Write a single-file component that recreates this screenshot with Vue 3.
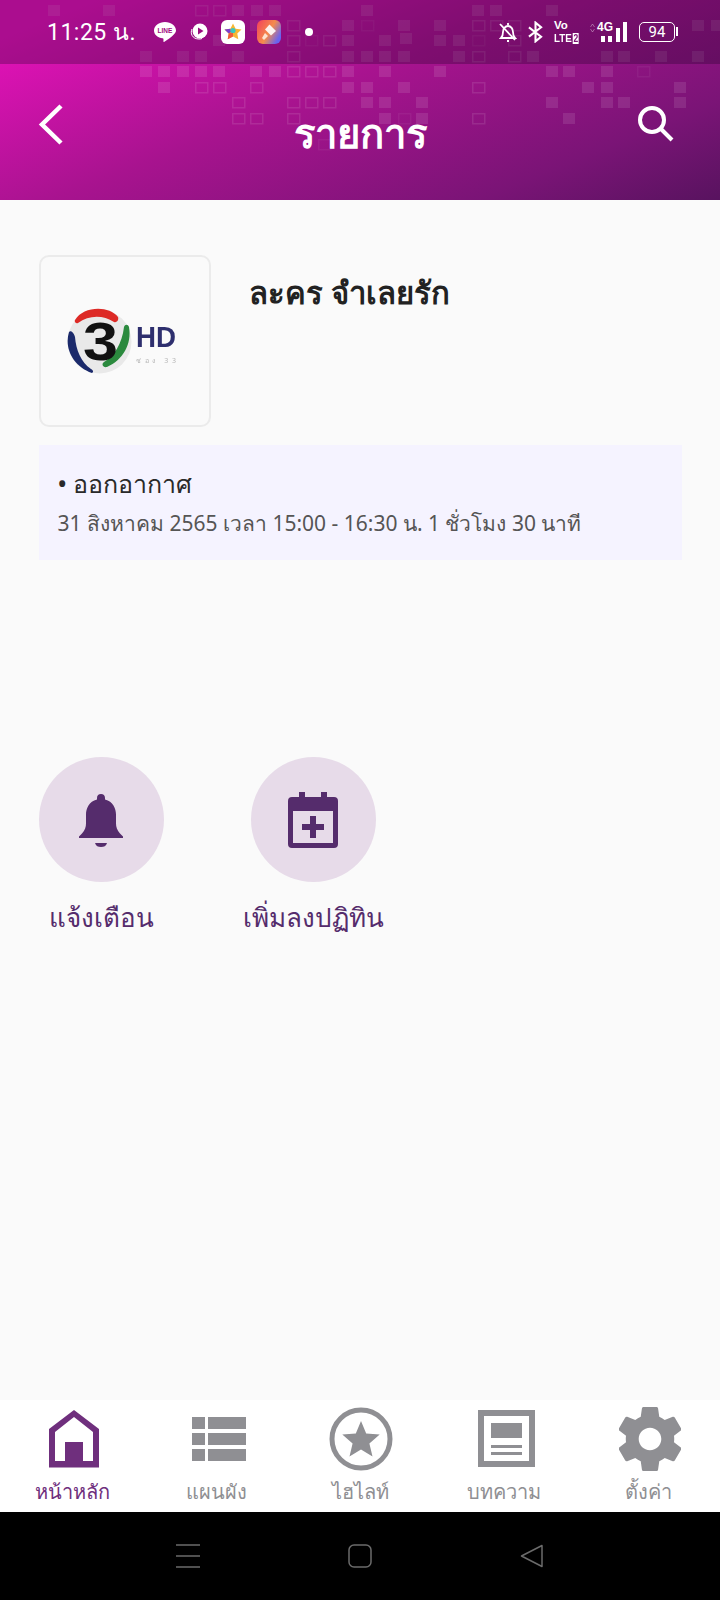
<script setup>
const filled = [[48,5],[103,5],[232,5],[251,5],[269,5],[361,5],[472,5],[490,5],[546,5],[250,20],[342,20],[398,20],[434,20],[692,20],[711,20],[213,35],[342,35],[379,35],[400,33],[434,35],[453,35],[140,51],[177,51],[195,51],[232,51],[342,51],[361,51],[379,51],[398,51],[453,51],[527,51],[601,51],[618,51],[655,51],[692,51],[140,66],[158,66],[177,66],[195,66],[213,66],[250,66],[269,66],[342,66],[379,66],[434,66],[546,66],[563,66],[601,66],[158,82],[342,82],[361,82],[398,82],[582,82],[601,82],[674,82],[361,97],[379,97],[416,97],[546,97],[601,97],[618,97],[674,97],[379,113],[416,113],[563,113]]
const outlined = [[195,5],[213,5],[287,20],[472,20],[490,20],[508,20],[287,35],[323,35],[508,35],[287,51],[472,51],[508,51],[287,66],[305,66],[323,66],[195,82],[213,82],[250,82],[472,82],[232,97],[287,97],[305,97],[323,97],[232,113],[250,113],[287,113],[472,113]]
const faint = [[361,20],[305,35],[472,35],[637,66],[398,113],[318,139]]
const tabs = [
  { key: 'home', label: 'หน้าหลัก', active: true },
  { key: 'plan', label: 'แผนผัง' },
  { key: 'star', label: 'ไฮไลท์' },
  { key: 'news', label: 'บทความ' },
  { key: 'gear', label: 'ตั้งค่า' }
]
</script>

<template>
  <div class="page">
    <div class="top">
      <svg class="pattern" width="720" height="200" viewBox="0 0 720 200">
        <rect v-for="(s, i) in filled" :key="'f' + i" :x="s[0]" :y="s[1]" width="12" height="11" fill="#fff" fill-opacity=".1" />
        <rect v-for="(s, i) in outlined" :key="'o' + i" :x="s[0] + .75" :y="s[1] + .75" width="12" height="10" fill="none" stroke="#fff" stroke-opacity=".1" stroke-width="1.500" />
        <rect v-for="(s, i) in faint" :key="'g' + i" :x="s[0] + .75" :y="s[1] + .75" width="12" height="10" fill="none" stroke="#fff" stroke-opacity=".05" stroke-width="1.500" />
      </svg>
      <div class="status">
        <span class="time">11:25 น.</span>
        <div class="notif">
          <svg width="24" height="24" viewBox="0 0 24 24"><path d="M12 2C5.900 2 1 5.900 1 10.400c0 4.200 3.900 7.200 8.600 7.900.6.100.9.400.9 1l-.1 2.200c0 .5.500.6 1 .3 2.500-1.600 7.300-4.700 9.400-7.300 1.300-1.500 2.200-2.500 2.200-4.100C23 5.900 18.100 2 12 2z" fill="#fff" /><text x="12" y="13" text-anchor="middle" font-size="6.500" font-weight="700" fill="#a00b80" font-family="Liberation Sans">LINE</text></svg>
          <svg width="20" height="20" viewBox="0 0 20 20"><circle cx="11" cy="9" r="7.500" fill="#fff" /><path d="M9 5.500l5.500 3.500L9 12.500z" fill="#9c0b80" /><path d="M3 7c-2 4 0 10 7 10 1 0 2 0 3-.5" fill="none" stroke="#fff" stroke-width="1" /></svg>
          <div class="appicon white">
            <svg width="20" height="20" viewBox="0 0 20 20"><path d="M10 1.500l2.600 5.200 5.900.8-4.200 4 1 5.800L10 14.600l-5.300 2.700 1-5.800-4.200-4 5.900-.8z" fill="#f7b733" /><path d="M1.500 7.500l5.900-.8L8 10l-2.300 1.500z" fill="#7b3fd1" /><path d="M4.700 17.300l1-5.800L10 10l0 4.600z" fill="#ef5a3c" /><circle cx="10" cy="8.500" r="2.600" fill="#3cc6c0" /></svg>
          </div>
          <div class="appicon paint">
            <svg width="20" height="20" viewBox="0 0 20 20"><path d="M10.500 2.500l6.500 6.500-5 4.500-6-6z" fill="#fff" fill-opacity=".9" /><path d="M6 11l3 3-4 4-2-2z" fill="#fde3d0" /></svg>
          </div>
          <span class="dot"></span>
        </div>
        <div class="sys">
          <svg width="18" height="22" viewBox="0 0 18 22" fill="none" stroke="#fff" stroke-width="1.800"><path d="M2 17h14c-1.500-1.500-2-3-2-6 0-3-2-6-5-6S4 8 4 11c0 3-.5 4.500-2 6z" /><path d="M9 2v2M8 20h2M1 3l15 16" /></svg>
          <svg width="15" height="22" viewBox="0 0 16 22" fill="none" stroke="#fff" stroke-width="2.200"><path d="M1 6l13 10-6 5V1l6 5L1 16" /></svg>
          <div class="volte"><span class="vo">Vo</span><span class="lte">LTE<b>2</b></span></div>
          <div class="net">
            <svg class="updown" width="5" height="10" viewBox="0 0 5 10" fill="none" stroke="#fff" stroke-opacity=".35" stroke-width="1"><path d="M.5 4l2-3 2 3M.5 6l2 3 2-3" /></svg>
            <span class="g4">4G</span>
            <div class="bars"><i class="b1"></i><i class="b2"></i><i class="b3"></i><i class="b4"></i></div>
          </div>
          <div class="batt"><span>94</span></div>
        </div>
      </div>
      <header class="bar">
        <svg class="back" width="28" height="44" viewBox="0 0 28 44" fill="none" stroke="#fff" stroke-width="4.500"><path d="M24 3L5 21.500 24 40" /></svg>
        <span class="title">รายการ</span>
        <svg class="search" width="40" height="40" viewBox="0 0 40 40" fill="none" stroke="#fff" stroke-width="4"><circle cx="16" cy="16" r="12" /><path d="M25 25l11 11" /></svg>
      </header>
    </div>

    <main class="content">
      <section class="head">
        <div class="logo">
          <svg class="mark" width="120" height="76" viewBox="0 0 120 76">
            <circle cx="34.500" cy="38.500" r="32" fill="#e9e9e9" />
            <path d="M10 17C18 3 44 2 53 14c1 3-1 6-4 5C38 12 24 12 13 20c-2 1-4-1-3-3z" fill="#dd2a26" />
            <path d="M4 29C-1 45 8 63 27 70c2-1 1-3-1-4C16 59 11 47 10 34c-1-4-4-7-6-5z" fill="#1b2a6b" />
            <path d="M64 24c3 17-6 33-22 40-4 1-6-3-3-5 10-6 18-18 20-35 1-3 4-3 5 0z" fill="#2b8a3e" />
            <text x="18" y="57" font-size="53" font-weight="700" fill="#111" font-family="Liberation Sans" textLength="35" lengthAdjust="spacingAndGlyphs">3</text>
            <text x="71" y="44" font-size="29" font-weight="700" fill="#2e2f6e" font-family="Liberation Sans" textLength="40" lengthAdjust="spacingAndGlyphs">HD</text>
            <text x="71" y="60" font-size="7" fill="#b5b5b5" font-family="Noto Sans, sans-serif" textLength="40">ช่อง 33</text>
          </svg>
        </div>
        <h1 class="name">ละคร จำเลยรัก</h1>
      </section>

      <section class="info">
        <div class="lead">• ออกอากาศ</div>
        <div class="when">31 สิงหาคม 2565 เวลา 15:00 - 16:30 น. 1 ชั่วโมง 30 นาที</div>
      </section>

      <section class="actions">
        <div class="action">
          <div class="circle">
            <svg width="48" height="54" viewBox="0 0 48 54"><path d="M24 1c2.500 0 4 1.500 4 4v1.500c8 2 11 9 11 15v9c0 3 1 7 4 10l3 3v1.500H2V43.500l3-3c3-3 4-7 4-10v-9c0-6 3-13 11-15V5c0-2.500 1.500-4 4-4z" fill="#552c6c" /><path d="M18 50h12c-1 3-3 4-6 4s-5-1-6-4z" fill="#552c6c" /></svg>
          </div>
          <span class="alabel">แจ้งเตือน</span>
        </div>
        <div class="action">
          <div class="circle">
            <svg width="50" height="56" viewBox="0 0 50 56"><path d="M4 5h7V0h6v5h16V0h6v5h7a4 4 0 0 1 4 4v43a4 4 0 0 1-4 4H4a4 4 0 0 1-4-4V9a4 4 0 0 1 4-4zm1 14v32h40V19zm17 5h6v8h8v6h-8v8h-6v-8h-8v-6h8z" fill="#552c6c" fill-rule="evenodd" /></svg>
          </div>
          <span class="alabel">เพิ่มลงปฏิทิน</span>
        </div>
      </section>
    </main>

    <nav class="tabs">
      <div v-for="t in tabs" :key="t.key" class="tab" :class="{ on: t.active }">
        <div class="ticon" :class="t.key">
          <svg v-if="t.key === 'home'" width="52" height="58" viewBox="0 0 52 58"><path d="M26 0L51 19v38.500H1V19zM7 22v29h10V32h18v19h10V22L26 7z" fill="#6f2f7d" fill-rule="evenodd" /></svg>
          <svg v-else-if="t.key === 'plan'" width="54" height="44" viewBox="0 0 54 44" fill="#8f8f93"><rect x="0" y="0" width="13" height="12" /><rect x="16" y="0" width="38" height="12" /><rect x="0" y="16" width="13" height="12" /><rect x="16" y="16" width="38" height="12" /><rect x="0" y="32" width="13" height="12" /><rect x="16" y="32" width="38" height="12" /></svg>
          <svg v-else-if="t.key === 'star'" width="64" height="64" viewBox="0 0 64 64"><circle cx="32" cy="32" r="29" fill="none" stroke="#8f8f93" stroke-width="5" /><path d="M32 14l5.200 12.500 13.500 1.100-10.300 8.800 3.100 13.200L32 42.600l-11.500 7 3.100-13.200-10.300-8.800 13.500-1.100z" fill="#8f8f93" /></svg>
          <svg v-else-if="t.key === 'news'" width="57" height="57" viewBox="0 0 57 57" fill="#8f8f93"><path d="M0 0h57v57H0zM6 6v45h45V6z" fill-rule="evenodd" /><rect x="13" y="13" width="31" height="15" /><rect x="13" y="35" width="31" height="3" /><rect x="13" y="42" width="31" height="3" /></svg>
          <svg v-else width="62" height="64" viewBox="2.400 2 19.200 20" preserveAspectRatio="none"><path d="M19.430 12.980c.040-.320.070-.640.070-.980s-.030-.660-.070-.980l2.110-1.650c.190-.150.240-.420.120-.640l-2-3.460c-.120-.220-.390-.300-.610-.220l-2.490 1c-.520-.400-1.080-.730-1.690-.980l-.380-2.650C14.460 2.180 14.250 2 14 2h-4c-.250 0-.460.180-.490.420l-.380 2.650c-.610.250-1.170.590-1.690.980l-2.490-1c-.230-.090-.490 0-.610.220l-2 3.460c-.130.220-.070.490.120.640l2.110 1.650c-.040.320-.070.650-.070.980s.030.660.070.980l-2.110 1.650c-.190.150-.240.420-.120.640l2 3.460c.120.220.390.300.610.220l2.490-1c.520.400 1.080.730 1.690.980l.380 2.650c.030.240.240.420.490.420h4c.250 0 .460-.180.490-.420l.380-2.650c.610-.250 1.170-.590 1.690-.980l2.490 1c.230.090.490 0 .610-.220l2-3.460c.120-.220.070-.490-.120-.640l-2.110-1.650zM12 15.500c-1.930 0-3.500-1.570-3.500-3.500s1.570-3.500 3.500-3.500 3.500 1.570 3.500 3.500-1.570 3.500-3.500 3.500z" fill="#8f8f93" /></svg>
        </div>
        <span class="tlabel">{{ t.label }}</span>
      </div>
    </nav>

    <div class="sysnav">
      <svg width="24" height="24" viewBox="0 0 24 24" stroke="#6b6b6b" stroke-width="1.500"><path d="M0 1h24M0 12h24M0 23h24" /></svg>
      <svg width="24" height="24" viewBox="0 0 24 24" fill="none" stroke="#6b6b6b" stroke-width="1.500"><rect x="1" y="1" width="22" height="22" rx="5" /></svg>
      <svg width="24" height="24" viewBox="0 0 24 24" fill="none" stroke="#6b6b6b" stroke-width="1.500"><path d="M1.500 12L22 1.500v21z" stroke-linejoin="round" /></svg>
    </div>
  </div>
</template>

<style scoped>
.page {
  width: 720px;
  height: 1600px;
  display: flex;
  flex-direction: column;
  background: #fafafa;
  font-family: "Noto Sans", "Liberation Sans", sans-serif;
  overflow: hidden;
}
.top {
  position: relative;
  height: 200px;
  flex: none;
  background: linear-gradient(158deg, #e412b9 8%, #a8138f 45%, #7a1476 80%, #58135f 100%);
  color: #fff;
}
.pattern { position: absolute; left: 0; top: 0; }
.status {
  position: relative;
  height: 64px;
  box-sizing: border-box;
  padding: 0 45px 0 47px;
  display: flex;
  align-items: center;
  background: rgba(20, 0, 30, .27);
}
.time { font-size: 23px; letter-spacing: .5px; font-family: Roboto, "Noto Sans", sans-serif; width: 106px; white-space: nowrap; }
.notif { display: flex; align-items: center; gap: 12px; }
.appicon { width: 24px; height: 24px; border-radius: 6px; display: flex; align-items: center; justify-content: center; }
.appicon.white { background: #fff; }
.appicon.paint { background: linear-gradient(120deg, #f2405c, #f58b4c 50%, #6a63ef 85%); }
.dot { width: 8px; height: 8px; background: #fff; border-radius: 50%; margin-left: 12px; }
.sys { margin-left: auto; display: flex; align-items: center; gap: 11px; }
.volte { display: flex; flex-direction: column; width: 25px; font-family: "Liberation Sans", sans-serif; font-weight: 700; white-space: nowrap; }
.volte .vo { font-size: 11.500px; line-height: 13px; }
.volte .lte { font-size: 11.500px; line-height: 13px; transform: scaleX(.85); transform-origin: left; }
.volte .lte b { background: #fff; color: #7d1173; font-size: 10px; margin-left: 1px; padding: 0 1px; }
.net { position: relative; width: 38px; height: 20px; }
.updown { position: absolute; left: 0; top: 1px; }
.g4 { position: absolute; left: 7px; top: -1px; font-size: 12px; line-height: 12px; font-weight: 700; font-family: "Liberation Sans", sans-serif; }
.bars i { position: absolute; bottom: 0; width: 4px; background: #fff; }
.bars .b1 { left: 11px; height: 6px; }
.bars .b2 { left: 18px; height: 6px; }
.bars .b3 { left: 26px; height: 14px; }
.bars .b4 { left: 33px; height: 20px; }
.batt {
  position: relative;
  width: 36px;
  height: 20px;
  box-sizing: border-box;
  border: 1.500px solid #fff;
  border-radius: 5px;
  display: flex;
  align-items: center;
  justify-content: center;
  font-size: 15px;
  font-family: Roboto, sans-serif;
}
.batt::after { content: ""; position: absolute; right: -4px; top: 4px; width: 2px; height: 9px; background: #fff; }
.bar { position: relative; height: 136px; display: flex; align-items: flex-start; justify-content: center; }
.back { position: absolute; left: 37px; top: 39px; }
.search { position: absolute; left: 636px; top: 40px; }
.title { font-size: 40px; font-weight: 700; line-height: 50px; margin-top: 44px; }
.content { flex: 1; padding: 55px 38.500px 0; }
.head { display: flex; gap: 38px; }
.logo {
  width: 172px;
  height: 172px;
  box-sizing: border-box;
  border: 2px solid #ebebeb;
  border-radius: 10px;
  display: flex;
  align-items: center;
  justify-content: center;
}
.mark { filter: blur(.5px); }
.name { margin: 15px 0 0; font-size: 31px; font-weight: 700; color: #222; line-height: 44px; }
.info { margin-top: 18px; height: 115px; box-sizing: border-box; padding: 20px 19px; background: #f5f3ff; }
.lead { font-size: 25px; font-weight: 500; line-height: 36px; color: #2a2a2a; }
.when { font-size: 21px; line-height: 36px; color: #555; margin-top: 4px; white-space: nowrap; }
.actions { margin-top: 197px; display: flex; gap: 0; }
.action { width: 212px; display: flex; flex-direction: column; align-items: flex-start; }
.circle { width: 125px; height: 125px; border-radius: 50%; background: #e7dbe9; display: flex; align-items: center; justify-content: center; }
.alabel { font-size: 26px; font-weight: 500; line-height: 40px; color: #552c6c; margin-top: 15px; width: 125px; white-space: nowrap; display: flex; justify-content: center; }
.tabs { height: 112px; flex: none; background: #fff; display: flex; }
.tab { flex: 1; display: flex; flex-direction: column; align-items: center; }
.ticon { height: 77px; display: flex; align-items: center; justify-content: center; }
.ticon.home { margin-left: 3px; }
.ticon.plan { margin-left: 6px; }
.ticon.star { margin-left: 2px; }
.ticon.news { margin-left: 4px; }
.ticon.gear { margin-left: 4px; }
.tlabel { font-size: 20px; font-weight: 500; line-height: 30px; color: #8f8f93; }
.tab.on .tlabel { color: #6f2f7d; }
.sysnav { height: 88px; flex: none; background: #000; display: flex; align-items: center; justify-content: center; gap: 148px; }
</style>
